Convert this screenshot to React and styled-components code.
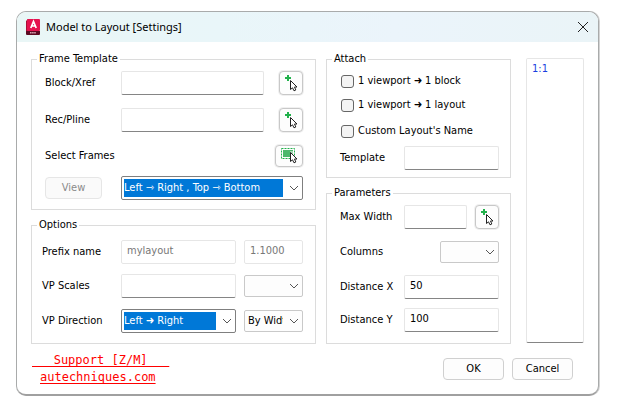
import React from "react";
import styled, { createGlobalStyle, css } from "styled-components";

const GlobalStyle = createGlobalStyle`
  *, *::before, *::after { box-sizing: border-box; }
  body {
    margin: 0;
    background: #ffffff;
    color: #000000;
    font: 11px/14px "DejaVu Sans Condensed", "Noto Sans", sans-serif;
  }
  button, input, select, textarea { font: inherit; color: inherit; margin: 0; }
`;

const Dialog = styled.main`
  margin: 11px 18px 14px 16px;
  border: 1px solid #a9abab;
  border-bottom: 2px solid #a0a0a0;
  border-radius: 10px;
  box-shadow: 1px 0 0 #d4d4d4;
  overflow: hidden;
  background: #ffffff;
`;

const TitleBar = styled.header`
  display: flex;
  align-items: center;
  gap: 6px;
  height: 30px;
  padding: 0 10px 0 9px;
  background: linear-gradient(90deg, #e9f6f6 0%, #e9f6f9 35%, #ebf4fb 65%, #eaf4f7 100%);
`;

const Title = styled.h1`
  flex: 1;
  margin: 0;
  font: 11px/16px "Noto Sans", sans-serif;
`;

const CloseButton = styled.button`
  display: flex;
  padding: 0;
  border: 0;
  background: none;
`;

const Body = styled.div`
  display: grid;
  grid-template-columns: minmax(0, 295fr) minmax(0, 200fr) minmax(0, 58fr);
  padding: 10px 14px 0;
`;

const Column = styled.div`
  display: flex;
  flex-direction: column;
  gap: 8px;
  margin-right: ${(p) => p.$gap};
`;

const Group = styled.fieldset`
  min-width: 0;
  margin: 0;
  padding: ${(p) => p.$pad};
  border: 1px solid #dcdcdc;
`;

const Legend = styled.legend`
  padding: 0 2px;
  margin-left: ${(p) => p.$indent};
`;

const Row = styled.div`
  display: flex;
  align-items: center;
  gap: ${(p) => p.$gap || "8px"};
  height: ${(p) => p.$h};
`;

const Label = styled.label`
  flex: none;
  width: ${(p) => p.$w};
  white-space: nowrap;
`;

const Caption = styled.span`
  flex: 1;
`;

const Cell = styled.div`
  flex: none;
  width: ${(p) => p.$w};
`;

const TextBox = styled.input`
  flex: ${(p) => (p.$w ? "none" : "1")};
  width: ${(p) => p.$w || "0"};
  min-width: 0;
  height: 24px;
  padding: 0 5px 3px;
  border: 1px solid #e6e6e6;
  border-bottom-color: #858585;
  border-radius: 2px;
  background: #ffffff;
  &:disabled {
    border-bottom-color: #e6e6e6;
    color: #777777;
  }
`;

const SelectBox = styled.span`
  position: relative;
  display: flex;
  flex: ${(p) => (p.$w ? "none" : "1")};
  width: ${(p) => p.$w || "auto"};
  min-width: 0;
  margin-left: ${(p) => (p.$end ? "auto" : "0")};
`;

const Select = styled.select`
  appearance: none;
  width: 100%;
  height: 22px;
  padding: 1px 19px 1px 3px;
  border: 1px solid #c9c9c9;
  border-radius: 2px;
  background: #fdfdfd;
  text-overflow: clip;
  ${(p) =>
    p.$active &&
    css`
      height: 24px;
      padding: 2px 19px 2px 2px;
      border-color: #7f7f7f;
      color: #ffffff;
      background: #0078d7 content-box;
    `}
`;

const ChevronIcon = styled.svg`
  position: absolute;
  right: 4px;
  top: 50%;
  transform: translateY(-50%);
  pointer-events: none;
`;

const PickButton = styled.button`
  flex: none;
  display: flex;
  align-items: center;
  justify-content: center;
  width: ${(p) => p.$w || "24px"};
  height: ${(p) => p.$h || "24px"};
  padding: 0;
  border: 1px solid #c8c8c8;
  border-radius: 4px;
  background: #fdfdfd;
  box-shadow: 0 0 0 1px #f0f0f0;
`;

const PushButton = styled.button`
  width: ${(p) => p.$w};
  height: 22px;
  padding: 0;
  border: 1px solid #d0d0d0;
  border-radius: 4px;
  background: #fdfdfd;
  &:disabled {
    border-color: #e6e6e6;
    background: #fafafa;
    color: #8a8a8a;
  }
`;

const CheckRow = styled.label`
  display: flex;
  align-items: center;
  gap: 4px;
  height: ${(p) => p.$h};
  padding-left: 1px;
  white-space: nowrap;
`;

const CheckBox = styled.input`
  appearance: none;
  flex: none;
  width: 13px;
  height: 13px;
  margin: 0;
  border: 1px solid #666666;
  border-radius: 3px;
  background: #f4f4f4;
`;

const ListBox = styled.textarea`
  display: block;
  width: 100%;
  height: 285px;
  margin-top: 6px;
  padding: 3px 5px;
  border: 1px solid #e6e6e6;
  border-bottom-color: #858585;
  border-radius: 2px;
  resize: none;
  && { color: #1a3fe0; }
`;

const Footer = styled.footer`
  display: flex;
  align-items: flex-start;
  justify-content: space-between;
  padding: 8px 25px 8px 15px;
`;

const Links = styled.nav`
  display: flex;
  flex-direction: column;
  align-items: flex-start;
  font: 12px/17px "DejaVu Sans Mono", monospace;
`;

const Link = styled.a`
  margin-left: ${(p) => p.$indent};
  color: #ff0000;
  white-space: pre;
  text-decoration: underline;
  text-underline-offset: 2px;
  text-decoration-skip-ink: none;
`;

const Actions = styled.div`
  display: flex;
  gap: 8px;
  padding-top: 6px;
`;

function AppLogo() {
  return (
    <svg width="14" height="16" viewBox="0 0 14 16" aria-hidden="true">
      <path d="M0 2 2 0V13L0 15Z" fill="#a80f36" />
      <rect x="1" width="13" height="12" rx="1" fill="#e5124f" />
      <path d="M0 12H14V15Q14 16 13 16H1Q0 16 0 15Z" fill="#5c0a22" />
      <path d="M4.8 9 7.5 2.5 10.2 9M5.8 7H9.2" fill="none" stroke="#fff" strokeWidth="1.7" />
      <path d="M4 13.8H10" stroke="#d8a0b0" strokeWidth="1.4" strokeDasharray="1.6 .5" />
    </svg>
  );
}

function Pointer({ x, y }) {
  return (
    <path
      transform={`translate(${x} ${y})`}
      d="M.5.5V9.5L2.5 7.8 4 10.8 5.8 10 4.5 7H7Z"
      fill="#fff"
      stroke="#222"
      strokeWidth="1"
    />
  );
}

function PickPointIcon() {
  return (
    <svg width="22" height="22" viewBox="0 0 22 22" aria-hidden="true">
      <path d="M5 6H11M8 3V9" stroke="#22b14c" strokeWidth="2" />
      <Pointer x={10} y={8} />
    </svg>
  );
}

function PickAreaIcon() {
  return (
    <svg width="26" height="20" viewBox="0 0 26 20" aria-hidden="true">
      <rect x="5.5" y="2.5" width="13" height="10" fill="none" stroke="#22b14c" strokeDasharray="2 1" />
      <path d="M7 4H17V11H7Z" fill="#4cb86c" />
      <path d="M14 5H17V8H14Z" fill="#a5dab4" />
      <Pointer x={14} y={6} />
    </svg>
  );
}

function PickPoint({ label }) {
  return (
    <PickButton type="button" aria-label={label}>
      <PickPointIcon />
    </PickButton>
  );
}

function DropDown({ w, end, active, id, label, value = "" }) {
  return (
    <SelectBox $w={w} $end={end}>
      <Select id={id} aria-label={label} $active={active} defaultValue={value}>
        <option value={value}>{value}</option>
      </Select>
      <ChevronIcon width="10" height="6" viewBox="0 0 10 6" aria-hidden="true">
        <path d="M1 1 5 5 9 1" fill="none" stroke="#555" />
      </ChevronIcon>
    </SelectBox>
  );
}

function Check({ h, children }) {
  return (
    <CheckRow $h={h}>
      <CheckBox type="checkbox" />
      {children}
    </CheckRow>
  );
}

export default function App() {
  return (
    <>
      <GlobalStyle />
      <Dialog>
        <TitleBar>
          <AppLogo />
          <Title>Model to Layout [Settings]</Title>
          <CloseButton type="button" aria-label="Close">
            <svg width="10" height="10" viewBox="0 0 10 10" aria-hidden="true">
              <path d="M0 0 10 10M10 0 0 10" stroke="#222" />
            </svg>
          </CloseButton>
        </TitleBar>

        <Body>
          <Column $gap="10px">
            <Group $pad="5px 12px 0 13px">
              <Legend $indent="-8px">Frame Template</Legend>
              <Row $h="24px" $gap="15px">
                <Label htmlFor="block" $w="61px">Block/Xref</Label>
                <TextBox id="block" />
                <PickPoint label="Pick block" />
              </Row>
              <Row $h="50px" $gap="15px">
                <Label htmlFor="rec" $w="61px">Rec/Pline</Label>
                <TextBox id="rec" />
                <PickPoint label="Pick polyline" />
              </Row>
              <Row $h="22px">
                <Caption>Select Frames</Caption>
                <PickButton type="button" $w="28px" $h="22px" aria-label="Select frames">
                  <PickAreaIcon />
                </PickButton>
              </Row>
              <Row $h="42px">
                <Cell $w="68px">
                  <PushButton type="button" disabled $w="57px">View</PushButton>
                </Cell>
                <DropDown active label="Frame order" value="Left ⇾ Right , Top ⇾ Bottom" />
              </Row>
            </Group>
            <Group $pad="8px 12px 9px 10px">
              <Legend $indent="-5px">Options</Legend>
              <Row $h="24px">
                <Label htmlFor="prefix" $w="71px">Prefix name</Label>
                <TextBox id="prefix" disabled defaultValue="mylayout" />
                <TextBox disabled aria-label="Number format" defaultValue="1.1000" $w="59px" />
              </Row>
              <Row $h="44px">
                <Label htmlFor="scales" $w="71px">VP Scales</Label>
                <TextBox id="scales" />
                <DropDown w="59px" label="Scale list" />
              </Row>
              <Row $h="26px">
                <Label htmlFor="direction" $w="71px">VP Direction</Label>
                <DropDown active id="direction" value="Left ➜ Right" />
                <DropDown w="59px" label="Sort" value="By Width" />
              </Row>
            </Group>
          </Column>

          <Column $gap="15px">
            <Group $pad="3px 11px 6px 13px">
              <Legend $indent="-8px">Attach</Legend>
              <Check h="24px">1 viewport ➜ 1 block</Check>
              <Check h="24px">1 viewport ➜ 1 layout</Check>
              <Check h="28px">Custom Layout's Name</Check>
              <Row $h="26px">
                <Label htmlFor="template" $w="56px">Template</Label>
                <TextBox id="template" />
              </Row>
            </Group>
            <Group $pad="5px 11px 2px 13px">
              <Legend $indent="-8px">Parameters</Legend>
              <Row $h="24px">
                <Label htmlFor="maxwidth" $w="56px">Max Width</Label>
                <TextBox id="maxwidth" />
                <PickPoint label="Pick width" />
              </Row>
              <Row $h="46px">
                <Label htmlFor="columns" $w="56px">Columns</Label>
                <DropDown w="59px" end id="columns" />
              </Row>
              <Row $h="24px">
                <Label htmlFor="dx" $w="56px">Distance X</Label>
                <TextBox id="dx" defaultValue="50" />
              </Row>
              <Row $h="42px">
                <Label htmlFor="dy" $w="56px">Distance Y</Label>
                <TextBox id="dy" defaultValue="100" />
              </Row>
            </Group>
          </Column>

          <ListBox aria-label="Scales" defaultValue="1:1" />
        </Body>

        <Footer>
          <Links>
            <Link href="#support" $indent="0">{"   Support [Z/M]   "}</Link>
            <Link href="#site" $indent="8px">autechniques.com</Link>
          </Links>
          <Actions>
            <PushButton type="button" $w="61px">OK</PushButton>
            <PushButton type="button" $w="61px">Cancel</PushButton>
          </Actions>
        </Footer>
      </Dialog>
    </>
  );
}
